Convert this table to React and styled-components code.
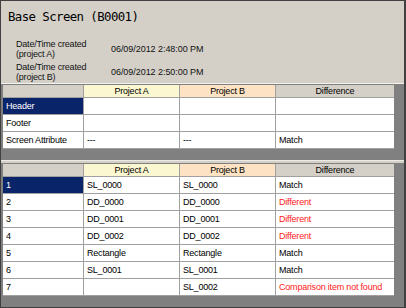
import styled, { createGlobalStyle } from "styled-components";

const GlobalStyle = createGlobalStyle`
  html, body {
    margin: 0;
    padding: 0;
    background: #d4d0c8;
  }
`;

const Frame = styled.div`
  width: 406px;
  height: 308px;
  box-sizing: border-box;
  border: 1px solid #404040;
  border-right-width: 2px;
  background: #d4d0c8;
  display: flex;
  flex-direction: column;
  font-family: "Liberation Sans", Arial, sans-serif;
  font-size: 9px;
  letter-spacing: -0.2px;
  color: #000;
  overflow: hidden;
`;

const Title = styled.div`
  height: 30px;
  line-height: 31px;
  padding-left: 7px;
  font-family: "DejaVu Sans Mono", monospace;
  font-size: 12.4px;
  letter-spacing: -0.6px;
  color: #000;
`;

const Info = styled.div`
  padding: 6px 0 0 15px;
  display: grid;
  grid-template-columns: 95px auto;
  grid-auto-rows: 23px;
  align-items: center;
  border-bottom: 1px solid #f4f2ee;
`;

const Label = styled.div`
  line-height: 10px;
  color: #111;
`;

const Value = styled.div`
  letter-spacing: -0.05px;
  color: #111;
`;

const Panel = styled.div`
  background: #808080;
  padding: 1px 0 0 2px;
  height: ${(p) => p.$height || "auto"};
  flex: ${(p) => (p.$grow ? 1 : "none")};
`;

const Splitter = styled.div`
  height: 2px;
  background: #d4d0c8;
  border-top: 1px solid #ecebe6;
`;

const Grid = styled.div`
  display: grid;
  grid-template-columns: 80px 95px 95px 118px;
  grid-template-rows: 12px;
  grid-auto-rows: 16px;
  gap: 1px;
  width: 391px;
  padding-bottom: 1px;
  background: #a0a0a0;
`;

const HeadCell = styled.div`
  background: ${(p) => p.$bg || "#d4d0c8"};
  text-align: center;
  line-height: 12px;
`;

const Cell = styled.div`
  background: ${(p) => (p.$selected ? "#0a246a" : "#fff")};
  color: ${(p) => (p.$selected ? "#fff" : p.$red ? "#ff1a1a" : "#000")};
  padding-left: 3px;
  line-height: 16px;
  white-space: nowrap;
  overflow: hidden;
`;

const headColors = ["#d4d0c8", "#fbf8d1", "#fde3c3", "#d4d0c8"];
const headLabels = ["", "Project A", "Project B", "Difference"];

const screenRows = [
  ["Header", "", "", ""],
  ["Footer", "", "", ""],
  ["Screen Attribute", "---", "---", "Match"],
];

const itemRows = [
  ["1", "SL_0000", "SL_0000", "Match"],
  ["2", "DD_0000", "DD_0000", "Different"],
  ["3", "DD_0001", "DD_0001", "Different"],
  ["4", "DD_0002", "DD_0002", "Different"],
  ["5", "Rectangle", "Rectangle", "Match"],
  ["6", "SL_0001", "SL_0001", "Match"],
  ["7", "", "SL_0002", "Comparison item not found"],
];

function CompareGrid({ rows }) {
  return (
    <Grid>
      {headLabels.map((label, i) => (
        <HeadCell key={i} $bg={headColors[i]}>
          {label}
        </HeadCell>
      ))}
      {rows.map((row, r) =>
        row.map((text, c) => (
          <Cell
            key={`${r}-${c}`}
            $selected={r === 0 && c === 0}
            $red={c === 3 && text !== "Match"}
          >
            {text}
          </Cell>
        ))
      )}
    </Grid>
  );
}

export default function App() {
  return (
    <>
      <GlobalStyle />
      <Frame>
        <Title>Base Screen (B0001)</Title>
        <Info>
          <Label>
            Date/Time created
            <br />
            (project A)
          </Label>
          <Value>06/09/2012 2:48:00 PM</Value>
          <Label>
            Date/Time created
            <br />
            (project B)
          </Label>
          <Value>06/09/2012 2:50:00 PM</Value>
        </Info>
        <Panel $height="75px">
          <CompareGrid rows={screenRows} />
        </Panel>
        <Splitter />
        <Panel $grow>
          <CompareGrid rows={itemRows} />
        </Panel>
      </Frame>
    </>
  );
}
